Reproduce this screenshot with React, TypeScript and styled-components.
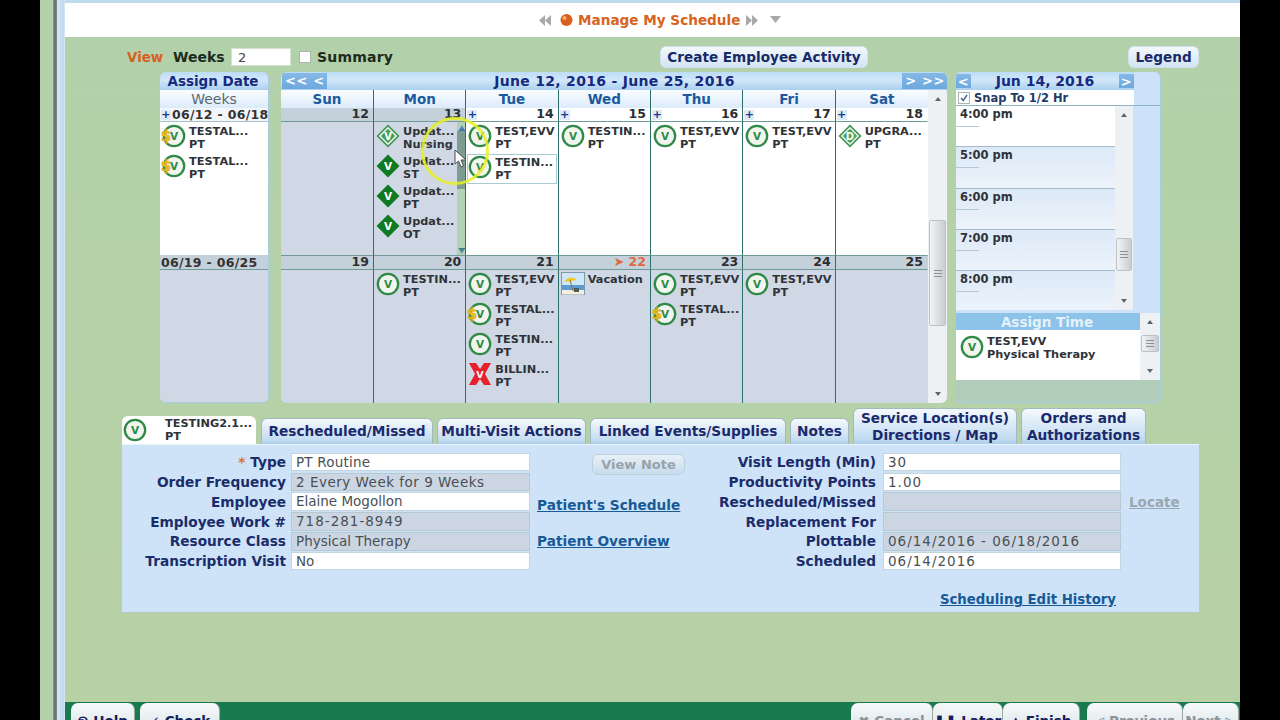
import React from "react";
import styled, { createGlobalStyle } from "styled-components";

const Global = createGlobalStyle`
  html, body { margin: 0; padding: 0; background: #000; }
  * { box-sizing: border-box; }
  body { font-family: "DejaVu Sans", Verdana, sans-serif; }
`;

const Page = styled.div`
  position: relative; width: 1280px; height: 720px; overflow: hidden; display: flex; background: #000;
`;
const Side = styled.div`width: 40px; flex: none; background: #000;`;
const Frame = styled.div`
  width: 1200px; flex: none; display: flex;
  background: #b3d1a9;
`;
const Strip = styled.div`
  width: 25px; flex: none;
  background: linear-gradient(90deg, #b3d1a9 0 13px, #8d9a94 13px, #5f6e6c 15px, #7f8c8c 17px, #d8e6f4 17px, #c2d8ee 24px, #e7f0f8 25px);
`;
const Main = styled.div`flex: 1; min-width: 0; display: flex; flex-direction: column;`;
const TopBar = styled.div`
  height: 37px; flex: none; background: #fff; border-top: 3px solid #bfdcee;
  display: flex; align-items: center; padding-left: 473px; color: #a1a1a1;
`;
const TitleText = styled.span`
  font-size: 13.6px; font-weight: 700; color: #d8631e; margin: 0 5px 0 4px; white-space: nowrap;
`;
const Content = styled.div`
  flex: 1; min-height: 0; display: flex; flex-direction: column; padding-top: 8px;
  background: linear-gradient(180deg, #b2d1aa, #b8d1a4);
`;
const Toolbar = styled.div`
  height: 24px; flex: none; display: flex; align-items: center; padding-left: 62px; color: #1d2b1d;
`;
const ViewLabel = styled.span`font-size: 13.4px; font-weight: 700; color: #d9601e; width: 46px; flex: none;`;
const WeeksLabel = styled.span`font-size: 14px; font-weight: 700; color: #1c2b20; width: 58px; flex: none;`;
const WeeksInput = styled.div`
  width: 60px; height: 18px; background: #fff; border: 1px solid #d5e2d2; font-size: 13px; color: #444; padding-left: 6px; line-height: 17px; flex: none;
`;
const CheckBox = styled.span<{ $checked?: boolean }>`
  width: 12px; height: 12px; flex: none; background: #fff; border: 1px solid #a7b4b2; display: inline-flex; align-items: center; justify-content: center;
`;
const SummaryBox = styled(CheckBox)`margin: 0 6px 0 8px;`;
const SummaryLabel = styled.span`font-size: 14px; font-weight: 700; color: #1d2b1d; letter-spacing: .2px; width: 343px; flex: none;`;
const ToolButton = styled.div<{ $width: number }>`
  width: ${p => p.$width}px; height: 22px; flex: none; border-radius: 6px; border: 1px solid #d2e2ec;
  background: linear-gradient(180deg, #f3f8fc, #d3e4f4); color: #182a66; font-weight: 700; font-size: 13.6px;
  display: flex; align-items: center; justify-content: center; white-space: nowrap;
`;
const ToolGap = styled.div`width: 260px; flex: none;`;

const CalendarRow = styled.div`
  flex: none; height: 331px; margin: 3px 0 0 95px; display: flex; align-items: stretch;
`;
const HeaderCss = `
  background: linear-gradient(180deg, #bcdcf5 0%, #d3e7f9 45%, #a9d0ef 100%);
`;
const AssignPanel = styled.div`
  width: 109px; flex: none; margin-right: 12px; border-radius: 6px; overflow: hidden; border: 1px solid #a8cce4; border-top: 0; border-left: 0;
  display: flex; flex-direction: column; background: #cfd8e4;
`;
const AssignHead = styled.div`
  height: 18px; flex: none; ${HeaderCss} color: #152a80; font-size: 13.5px; font-weight: 700; text-align: center; line-height: 18px; border-radius: 6px 6px 0 0; white-space: nowrap; padding-right: 2px;
`;
const WeeksHead = styled.div`
  height: 18px; flex: none; background: linear-gradient(180deg, #fafdff, #dcebfa); color: #5a6770; font-size: 14px; text-align: center; line-height: 18px;
`;
const WeekRange = styled.div<{ $gray?: boolean }>`
  height: ${p => p.$gray ? 15 : 14}px; flex: none; background: ${p => p.$gray ? "#c5d1da" : "#f3f6f8"}; border-bottom: 1px solid ${p => p.$gray ? "#6f9a98" : "#a8c2c8"};
  display: flex; align-items: center; font-size: 12.5px; font-weight: 700; color: #333; white-space: nowrap; padding-left: 1px; gap: 1px; letter-spacing: .3px;
`;
const WeekBody = styled.div<{ $gray?: boolean }>`
  flex: none; height: 133px; padding: 2px 0 0 2px; background: ${p => p.$gray ? "#cfd8e4" : "#fff"};
`;

const CalendarPanel = styled.div`
  width: 666px; flex: none; margin-right: 8px; border-radius: 6px; overflow: hidden; display: flex; flex-direction: column; background: #cfd8e4;
`;
const CalHead = styled.div`
  height: 18px; flex: none; ${HeaderCss} display: flex; align-items: center; position: relative; padding: 0 0 0 1px;
`;
const NavGroup = styled.div`display: flex; gap: 0;`;
const NavButton = styled.span<{ $w: number }>`
  width: ${p => p.$w}px; height: 16px; background: linear-gradient(180deg, #85b9e6, #6ea8de); color: #fff; font-size: 13px; font-weight: 700; line-height: 15px; text-align: center; letter-spacing: .5px; display: block;
`;
const CalTitle = styled.div`
  flex: 1; text-align: center; color: #152a80; font-size: 14px; font-weight: 700; white-space: nowrap; letter-spacing: .3px;
`;
const CalBody = styled.div`flex: 1; min-height: 0; display: flex;`;
const DayGrid = styled.div`
  flex: 1; display: grid; grid-template-columns: 93px repeat(6, 1fr); grid-template-rows: 18px 14px 133px 15px 133px;
`;
const DayName = styled.div`
  background: linear-gradient(180deg, #fafdff, #dcebfa); color: #1c5a9e; font-size: 13.5px; font-weight: 700; text-align: center; line-height: 18px;
  border-right: 1px solid #2f6f69;
  &:nth-child(7) { border-right: 0; }
`;
const DateCell = styled.div<{ $gray?: boolean; $week2?: boolean; $last?: boolean }>`
  background: ${p => p.$gray ? "#c5d1da" : "#fff"};
  border-right: 1px solid ${p => p.$last ? "transparent" : "#2f6f69"};
  border-bottom: 1px solid #6f9a98;
  ${p => p.$week2 ? "border-top: 1px solid #6f9a98;" : ""}
  display: flex; align-items: center; justify-content: space-between; padding: 0 4px 0 1px;
  font-size: 12.5px; font-weight: 700; color: #2b2f33; line-height: 1;
`;
const DateNum = styled.span<{ $hot?: boolean }>`
  margin-left: auto; color: ${p => p.$hot ? "#e0693a" : "#2b2f33"}; white-space: nowrap;
`;
const Plus = styled.span`
  width: 10px; height: 10px; flex: none; background: #dfeaf6; color: #163a8c; font-size: 11px; line-height: 10px; text-align: center; font-weight: 700; display: block;
`;
const BodyCell = styled.div<{ $gray?: boolean; $last?: boolean }>`
  background: ${p => p.$gray ? "#cfd8e4" : "#fff"};
  border-right: 1px solid ${p => p.$last ? "transparent" : "#2f6f69"};
  padding: 2px 0 0 2px; position: relative; overflow: hidden; min-width: 0;
`;
const Event = styled.div<{ $selected?: boolean }>`
  height: 30px; display: flex; align-items: flex-start; gap: 3px;
  ${p => p.$selected ? "box-shadow: inset 0 0 0 1px #a9ccd4; margin: 0 1px 0 -1px; padding: 1px 0 0 1px;" : ""}
`;
const EventIconWrap = styled.div`width: 24px; height: 24px; flex: none; position: relative;`;
const EventText = styled.div`
  font-size: 11.3px; font-weight: 700; color: #2f3338; line-height: 13px; padding-top: 1px; white-space: pre;
`;
const ScrollTrack = styled.div<{ $w: number; $tint?: string }>`
  width: ${p => p.$w}px; flex: none; background: ${p => p.$tint || "#eef1f4"}; display: flex; flex-direction: column; align-items: center; justify-content: space-between; position: relative;
`;
const Arrow = styled.span<{ $down?: boolean; $color?: string }>`
  width: 0; height: 0; border-left: 3.5px solid transparent; border-right: 3.5px solid transparent;
  ${p => p.$down ? `border-top: 4px solid ${p.$color || "#5a6770"};` : `border-bottom: 4px solid ${p.$color || "#5a6770"};`}
  margin: 7px 0; flex: none;
`;
const Thumb = styled.div<{ $top: number; $h: number; $w: number }>`
  position: absolute; top: ${p => p.$top}px; left: 1px; width: ${p => p.$w}px; height: ${p => p.$h}px;
  background: linear-gradient(90deg, #f2f3f4, #c9cdd0); border: 1px solid #bcc2c6; border-radius: 2px;
  display: flex; flex-direction: column; align-items: center; justify-content: center; gap: 2px;
  & > i { display: block; width: 8px; height: 1px; background: #8b9296; }
`;
const MiniScroll = styled.div`
  position: absolute; top: 0; right: -1px; bottom: 0; width: 9px; background: #b4d2b4; display: flex; flex-direction: column; align-items: center; justify-content: space-between;
`;
const MiniThumb = styled.div`
  position: absolute; top: 9px; left: 0; width: 9px; height: 58px; background: #7d9c92;
`;
const MiniArrow = styled.span<{ $down?: boolean }>`
  width: 7px; height: 6px; display: block; position: relative; margin: 3px 0 1px;
  ${p => p.$down ? "background: linear-gradient(#3d7f86, #66a0b4); clip-path: polygon(0 0,100% 0,50% 100%);" : "background: linear-gradient(#66a0d4, #3d6fa6); clip-path: polygon(50% 0,100% 100%,0 100%);"}
`;

const DayPanel = styled.div`
  width: 206px; flex: none; border-radius: 6px; overflow: hidden; background: #cce2f8; border: 1px solid #a8cce4; border-top: 0;
  display: flex; flex-direction: column;
`;
const DayHead = styled.div`
  height: 18px; flex: none; margin-right: 26px; ${HeaderCss} display: flex; align-items: center; justify-content: space-between; color: #152a80; font-size: 14px; font-weight: 700; white-space: nowrap;
`;
const DayNav = styled(NavButton)`height: 14px;`;
const SnapRow = styled.div`
  height: 15px; flex: none; margin-right: 26px; background: #fff; display: flex; align-items: center; font-size: 11.5px; font-weight: 700; color: #223a66; gap: 4px; padding-left: 2px; white-space: nowrap;
`;
const SnapRule = styled.div`height: 1px; flex: none; background: #8fb4c4;`;
const TimeArea = styled.div`height: 204px; flex: none; display: flex; margin-right: 27px;`;
const TimeList = styled.div`flex: 1; display: flex; flex-direction: column; overflow: hidden;`;
const TimeRow = styled.div<{ $white?: boolean }>`
  height: 41.3px; flex: none; padding: 1px 0 0 4px; position: relative; border-bottom: 1px solid #a2bccb;
  background: ${p => p.$white ? "#fff" : "linear-gradient(180deg, #dde9f7, #ecf3fb)"};
  font-size: 11.5px; font-weight: 700; color: #2f3338; line-height: 14px;
  &::after { content: ""; position: absolute; left: 0; top: 20px; width: 23px; height: 1px; background: #b5c8d6; }
`;
const AssignTimeWrap = styled.div`margin-top: 3px; height: 67px; flex: none; display: flex;`;
const AssignTimeCol = styled.div`flex: 1; display: flex; flex-direction: column; min-width: 0;`;
const AssignTimeHead = styled.div`
  height: 17px; flex: none; background: #8ec3e9; color: #e4f1fb; font-size: 13.5px; font-weight: 700; text-align: center; line-height: 19px; padding-right: 2px;
`;
const AssignTimeBody = styled.div`
  flex: 1; background: #fff; display: flex; gap: 3px; padding: 5px 0 0 4px;
`;
const AssignTimeText = styled(EventText)`padding-top: 0;`;
const DayFoot = styled.div`flex: 1; background: #b1cdb9;`;

const Tabs = styled.div`
  height: 36px; flex: none; margin: 5px 0 0 57px; display: flex; align-items: flex-end; gap: 4px;
`;
const Tab = styled.div<{ $tall?: boolean; $w: number }>`
  width: ${p => p.$w}px; height: ${p => p.$tall ? 36 : 26}px; flex: none; border-radius: 6px 6px 0 0; border: 1px solid #a3b9c0; border-bottom: 0;
  background: linear-gradient(180deg, #f5f9fc, #c3dcf2 85%, #a8cde8);
  color: #1a2a6c; font-weight: 700; font-size: 13.7px; line-height: 16.5px; text-align: center; display: flex; align-items: center; justify-content: center; white-space: pre;
`;
const ActiveTab = styled.div`
  width: 134px; height: 28px; flex: none; border-radius: 6px 6px 0 0; background: #fff; display: flex; align-items: center; margin-right: 1px;
  padding-left: 1px; gap: 18px;
`;
const ActiveTabText = styled(EventText)`padding-top: 0;`;
const Panel = styled.div`
  height: 169px; flex: none; width: 1077px; margin-left: 57px; background: #cfe3f8; border-bottom: 1px solid #aec8c8; border-top: 1px solid #eaf3fb;
  padding-top: 8px; display: flex; flex-direction: column;
`;
const FormRow = styled.div`display: flex; align-items: flex-start;`;
const LeftGrid = styled.div`
  display: grid; grid-template-columns: 164px 239px; column-gap: 5px; row-gap: 1.85px; grid-auto-rows: 18px; align-items: center;
`;
const RightGrid = styled.div`
  display: grid; grid-template-columns: 176px 238px auto; column-gap: 7px; row-gap: 1.85px; grid-auto-rows: 18px; align-items: center;
`;
const Label = styled.div`
  grid-column: 1; text-align: right; color: #1b2c6b; font-weight: 700; font-size: 13.7px; white-space: nowrap;
  & > b { color: #d9742e; font-weight: 700; }
`;
const Field = styled.div<{ $gray?: boolean; $track?: number }>`
  grid-column: 2; height: 18.5px; background: ${p => p.$gray ? "#ccd6e2" : "#fff"}; border: 1px solid ${p => p.$gray ? "#b6cad4" : "#c3d6de"};
  font-size: 13.5px; color: #4a4f55; line-height: 17px; padding-left: 4px; white-space: nowrap; letter-spacing: ${p => p.$track ?? 0}px;
`;
const LocateLink = styled.span`
  grid-column: 3; grid-row: 3; color: #9aa8b2; font-weight: 700; font-size: 13.5px; text-decoration: underline; margin-left: 1px; white-space: nowrap;
`;
const Middle = styled.div`width: 163px; margin-left: 7px; flex: none; display: flex; flex-direction: column; padding-top: 1px;`;
const NoteButton = styled.div`
  width: 93px; height: 21px; margin-left: 55px; border-radius: 6px; border: 1px solid #bcd0dc; background: linear-gradient(180deg, #e8f0f6, #c8dcee);
  color: #98a2aa; font-weight: 700; font-size: 13px; display: flex; align-items: center; justify-content: center;
`;
const PatientLink = styled.span<{ $gap: number }>`
  margin-top: ${p => p.$gap}px; color: #175a96; font-weight: 700; font-size: 13.7px; text-decoration: underline; white-space: nowrap; line-height: 16px;
`;
const HistoryRow = styled.div`
  margin-top: 21px; padding-right: 83px; text-align: right; color: #175a96; font-weight: 700; font-size: 13.3px; text-decoration: underline; line-height: 17px;
`;
const Spacer = styled.div`flex: 1; min-height: 0;`;
const Footer = styled.div`
  height: 18px; flex: none; background: #197a4f; overflow: hidden; display: flex; align-items: flex-start; padding: 1px 0 0 6px;
`;
const FootButton = styled.div<{ $w: number; $off?: boolean; $gap?: number }>`
  width: ${p => p.$w}px; height: 26px; flex: none; margin-left: ${p => p.$gap ?? 0}px; background: linear-gradient(180deg, #f6f9fa, #dfe6ea);
  color: ${p => p.$off ? "#8a949a" : "#13205e"}; font-size: 13.5px; font-weight: 700; border-radius: 7px 7px 0 0;
  display: flex; justify-content: center; gap: 5px; padding-top: 10px; white-space: nowrap; overflow: hidden; border-right: 1px solid #9aa8a4;
`;
const Highlight = styled.div`
  position: absolute; left: 421px; top: 117px; width: 68px; height: 68px; border-radius: 50%; border: 3px solid rgba(232, 240, 40, .85); pointer-events: none; box-shadow: 0 0 2px rgba(232,240,40,.5);
`;
const Pointer = styled.svg`position: absolute; left: 454px; top: 149px; pointer-events: none;`;

type Kind = "circle" | "diamondO" | "diamond" | "dollar" | "x" | "d" | "beach";

const CircleV = () => (
  <>
    <circle cx="12" cy="12" r="10.2" fill="#f2f5ee" stroke="#2f8a48" strokeWidth="2.3" />
    <text x="12" y="16" textAnchor="middle" fontSize="10.5" fontWeight="700" fill="#2a8a44" fontFamily="DejaVu Sans">V</text>
  </>
);

const VisitIcon: React.FC<{ kind: Kind }> = ({ kind }) => (
  <EventIconWrap>
    <svg width="24" height="24" viewBox="0 0 24 24" style={{ overflow: "visible" }}>
      {kind === "circle" && <CircleV />}
      {kind === "dollar" && (
        <>
          <CircleV />
          <text x="4" y="17" textAnchor="middle" fontSize="15" fontWeight="700" fill="#f0c41f" stroke="#c79c10" strokeWidth=".5" fontFamily="DejaVu Sans">$</text>
        </>
      )}
      {(kind === "diamondO" || kind === "d") && (
        <>
          <path d="M12 .5 23.5 12 12 23.5.5 12Z" fill="#3d9050" />
          <path d="M12 2.7 21.3 12 12 21.3 2.7 12Z" fill="#eef6ef" />
          <path d="M12 4.8 19.2 12 12 19.2 4.8 12Z" fill="#46a058" />
          <text x="12" y="15.8" textAnchor="middle" fontSize="10" fontWeight="700" fill="#fff" fontFamily="DejaVu Sans">{kind === "d" ? "D" : "V"}</text>
        </>
      )}
      {kind === "diamond" && (
        <>
          <path d="M12 .5 23.5 12 12 23.5.5 12Z" fill="#0f7a22" />
          <text x="12" y="16" textAnchor="middle" fontSize="10.5" fontWeight="700" fill="#fff" fontFamily="DejaVu Sans">V</text>
        </>
      )}
      {kind === "x" && (
        <>
          <path d="M1 1H8L12 7 16 1H23L17 12 23 23H16L12 17 8 23H1L7 12Z" fill="#e8202c" />
          <text x="12" y="15.5" textAnchor="middle" fontSize="9.5" fontWeight="700" fill="#fff" fontFamily="DejaVu Sans">V</text>
        </>
      )}
      {kind === "beach" && (
        <>
          <rect x=".5" y=".5" width="23" height="22" fill="#cfe6f6" stroke="#7d99ac" />
          <rect x="1" y="13" width="22" height="5" fill="#5d9ad0" />
          <rect x="1" y="18" width="22" height="4.5" fill="#f4efe0" />
          <path d="M3 10Q9 2 16 8Z" fill="#f2c820" />
          <path d="M9 8 12 19" stroke="#8a7a40" strokeWidth="1" />
          <rect x="13" y="16" width="5" height="4" fill="#4f5a5a" />
        </>
      )}
    </svg>
  </EventIconWrap>
);

type Ev = { kind: Kind; a: string; b: string; sel?: boolean };
const Entry: React.FC<{ e: Ev }> = ({ e }) => (
  <Event $selected={e.sel}>
    <VisitIcon kind={e.kind} />
    <EventText>{e.a}{"\n"}{e.b}</EventText>
  </Event>
);

const week1: { date: number; gray?: boolean; ev: Ev[]; mini?: boolean }[] = [
  { date: 12, gray: true, ev: [] },
  { date: 13, gray: true, mini: true, ev: [
    { kind: "diamondO", a: "Updat...", b: "Nursing" },
    { kind: "diamond", a: "Updat...", b: "ST" },
    { kind: "diamond", a: "Updat...", b: "PT" },
    { kind: "diamond", a: "Updat...", b: "OT" },
  ] },
  { date: 14, ev: [{ kind: "circle", a: "TEST,EVV", b: "PT" }, { kind: "circle", a: "TESTIN...", b: "PT", sel: true }] },
  { date: 15, ev: [{ kind: "circle", a: "TESTIN...", b: "PT" }] },
  { date: 16, ev: [{ kind: "circle", a: "TEST,EVV", b: "PT" }] },
  { date: 17, ev: [{ kind: "circle", a: "TEST,EVV", b: "PT" }] },
  { date: 18, ev: [{ kind: "d", a: "UPGRA...", b: "PT" }] },
];
const week2: { date: number; hot?: boolean; ev: Ev[] }[] = [
  { date: 19, ev: [] },
  { date: 20, ev: [{ kind: "circle", a: "TESTIN...", b: "PT" }] },
  { date: 21, ev: [
    { kind: "circle", a: "TEST,EVV", b: "PT" },
    { kind: "dollar", a: "TESTAL...", b: "PT" },
    { kind: "circle", a: "TESTIN...", b: "PT" },
    { kind: "x", a: "BILLIN...", b: "PT" },
  ] },
  { date: 22, hot: true, ev: [{ kind: "beach", a: "Vacation", b: "" }] },
  { date: 23, ev: [{ kind: "circle", a: "TEST,EVV", b: "PT" }, { kind: "dollar", a: "TESTAL...", b: "PT" }] },
  { date: 24, ev: [{ kind: "circle", a: "TEST,EVV", b: "PT" }] },
  { date: 25, ev: [] },
];
const days = ["Sun", "Mon", "Tue", "Wed", "Thu", "Fri", "Sat"];
const times = ["4:00 pm", "5:00 pm", "6:00 pm", "7:00 pm", "8:00 pm"];

const Grip = () => (<><i /><i /><i /></>);

export default function App() {
  return (
    <Page>
      <Global />
      <Side />
      <Frame>
        <Strip />
        <Main>
          <TopBar>
            <svg width="14" height="11" viewBox="0 0 14 11"><path d="M7 0V11L1 5.5ZM13 0V11L7 5.5Z" fill="#a8a8a8" /></svg>
            <svg width="22" height="14" viewBox="0 0 22 14"><circle cx="14.5" cy="7" r="6" fill="#d9601e" /><circle cx="12.5" cy="5" r="2" fill="#f6b070" /></svg>
            <TitleText>Manage My Schedule</TitleText>
            <svg width="14" height="11" viewBox="0 0 14 11"><path d="M1 0V11L7 5.5ZM7 0V11L13 5.5Z" fill="#a8a8a8" /></svg>
            <svg width="25" height="8" viewBox="0 0 25 8"><path d="M11 0H22L16.5 7Z" fill="#a8a8a8" /></svg>
          </TopBar>
          <Content>
            <Toolbar>
              <ViewLabel>View</ViewLabel>
              <WeeksLabel>Weeks</WeeksLabel>
              <WeeksInput>2</WeeksInput>
              <SummaryBox />
              <SummaryLabel>Summary</SummaryLabel>
              <ToolButton $width={208}>Create Employee Activity</ToolButton>
              <ToolGap />
              <ToolButton $width={71}>Legend</ToolButton>
            </Toolbar>

            <CalendarRow>
              <AssignPanel>
                <AssignHead>Assign Date</AssignHead>
                <WeeksHead>Weeks</WeeksHead>
                <WeekRange><Plus>+</Plus>06/12 - 06/18</WeekRange>
                <WeekBody>
                  <Entry e={{ kind: "dollar", a: "TESTAL...", b: "PT" }} />
                  <Entry e={{ kind: "dollar", a: "TESTAL...", b: "PT" }} />
                </WeekBody>
                <WeekRange $gray>06/19 - 06/25</WeekRange>
                <WeekBody $gray />
              </AssignPanel>

              <CalendarPanel>
                <CalHead>
                  <NavGroup>
                    <NavButton $w={29}>&lt;&lt;</NavButton>
                    <NavButton $w={16}>&lt;</NavButton>
                  </NavGroup>
                  <CalTitle>June 12, 2016 - June 25, 2016</CalTitle>
                  <NavGroup>
                    <NavButton $w={18}>&gt;</NavButton>
                    <NavButton $w={27}>&gt;&gt;</NavButton>
                  </NavGroup>
                </CalHead>
                <CalBody>
                  <DayGrid>
                    {days.map(d => <DayName key={d}>{d}</DayName>)}
                    {week1.map((w, i) => (
                      <DateCell key={w.date} $gray={w.gray} $last={i === 6}>
                        {!w.gray && <Plus>+</Plus>}
                        <DateNum>{w.date}</DateNum>
                      </DateCell>
                    ))}
                    {week1.map((w, i) => (
                      <BodyCell key={w.date} $gray={w.gray} $last={i === 6}>
                        {w.ev.map((e, j) => <Entry key={j} e={e} />)}
                        {w.mini && (
                          <MiniScroll>
                            <MiniArrow />
                            <MiniThumb />
                            <MiniArrow $down />
                          </MiniScroll>
                        )}
                      </BodyCell>
                    ))}
                    {week2.map((w, i) => (
                      <DateCell key={w.date} $gray $week2 $last={i === 6}>
                        <DateNum $hot={w.hot}>{w.hot ? "➤ " : ""}{w.date}</DateNum>
                      </DateCell>
                    ))}
                    {week2.map((w, i) => (
                      <BodyCell key={w.date} $gray $last={i === 6}>
                        {w.ev.map((e, j) => <Entry key={j} e={e} />)}
                      </BodyCell>
                    ))}
                  </DayGrid>
                  <ScrollTrack $w={19}>
                    <Arrow />
                    <Thumb $top={130} $h={106} $w={17}><Grip /></Thumb>
                    <Arrow $down />
                  </ScrollTrack>
                </CalBody>
              </CalendarPanel>

              <DayPanel>
                <DayHead>
                  <DayNav $w={15}>&lt;</DayNav>
                  Jun 14, 2016
                  <DayNav $w={15}>&gt;</DayNav>
                </DayHead>
                <SnapRow>
                  <CheckBox $checked>
                    <svg width="10" height="10" viewBox="0 0 10 10"><path d="M2 5 4.2 7.5 8 2" fill="none" stroke="#3a6a9a" strokeWidth="1.4" /></svg>
                  </CheckBox>
                  Snap To 1/2 Hr
                </SnapRow>
                <SnapRule />
                <TimeArea>
                  <TimeList>
                    {times.map((t, i) => <TimeRow key={t} $white={i === 0}>{t}</TimeRow>)}
                  </TimeList>
                  <ScrollTrack $w={18}>
                    <Arrow />
                    <Thumb $top={132} $h={33} $w={16}><Grip /></Thumb>
                    <Arrow $down />
                  </ScrollTrack>
                </TimeArea>
                <AssignTimeWrap>
                  <AssignTimeCol>
                    <AssignTimeHead>Assign Time</AssignTimeHead>
                    <AssignTimeBody>
                      <VisitIcon kind="circle" />
                      <AssignTimeText>TEST,EVV{"\n"}Physical Therapy</AssignTimeText>
                    </AssignTimeBody>
                  </AssignTimeCol>
                  <ScrollTrack $w={20}>
                    <Arrow />
                    <Thumb $top={22} $h={17} $w={18}><Grip /></Thumb>
                    <Arrow $down />
                  </ScrollTrack>
                </AssignTimeWrap>
                <DayFoot />
              </DayPanel>
            </CalendarRow>

            <Tabs>
              <ActiveTab>
                <VisitIcon kind="circle" />
                <ActiveTabText>TESTING2.1...{"\n"}PT</ActiveTabText>
              </ActiveTab>
              <Tab $w={172}>Rescheduled/Missed</Tab>
              <Tab $w={149}>Multi-Visit Actions</Tab>
              <Tab $w={196}>Linked Events/Supplies</Tab>
              <Tab $w={59}>Notes</Tab>
              <Tab $w={164} $tall>{"Service Location(s)\nDirections / Map"}</Tab>
              <Tab $w={125} $tall>{"Orders and\nAuthorizations"}</Tab>
            </Tabs>
            <Panel>
              <FormRow>
                <LeftGrid>
                  <Label><b>*</b> Type</Label><Field $track={0.2}>PT Routine</Field>
                  <Label>Order Frequency</Label><Field $gray $track={0.5}>2 Every Week for 9 Weeks</Field>
                  <Label>Employee</Label><Field>Elaine Mogollon</Field>
                  <Label>Employee Work #</Label><Field $gray $track={1}>718-281-8949</Field>
                  <Label>Resource Class</Label><Field $gray>Physical Therapy</Field>
                  <Label>Transcription Visit</Label><Field>No</Field>
                </LeftGrid>
                <Middle>
                  <NoteButton>View Note</NoteButton>
                  <PatientLink $gap={22}>Patient's Schedule</PatientLink>
                  <PatientLink $gap={20}>Patient Overview</PatientLink>
                </Middle>
                <RightGrid>
                  <Label>Visit Length (Min)</Label><Field $track={1}>30</Field>
                  <Label>Productivity Points</Label><Field $track={1}>1.00</Field>
                  <Label>Rescheduled/Missed</Label><Field $gray />
                  <LocateLink>Locate</LocateLink>
                  <Label>Replacement For</Label><Field $gray />
                  <Label>Plottable</Label><Field $gray $track={1}>06/14/2016 - 06/18/2016</Field>
                  <Label>Scheduled</Label><Field $track={1}>06/14/2016</Field>
                </RightGrid>
              </FormRow>
              <HistoryRow>Scheduling Edit History</HistoryRow>
            </Panel>
            <Spacer />
          </Content>
          <Footer>
            <FootButton $w={64}>❷ Help</FootButton>
            <FootButton $w={80} $gap={5}>✓ Check</FootButton>
            <FootButton $w={82} $gap={631} $off>✖ Cancel</FootButton>
            <FootButton $w={70}>❚❚ Later</FootButton>
            <FootButton $w={77}>▲ Finish</FootButton>
            <FootButton $w={96} $gap={7} $off>◁ Previous</FootButton>
            <FootButton $w={56} $off>Next ▷</FootButton>
          </Footer>
        </Main>
      </Frame>
      <Side />
      <Highlight />
      <Pointer width="13" height="19" viewBox="0 0 13 19">
        <path d="M1 1V15L4.5 12 7 18 9.5 17 7 11H12Z" fill="#fff" stroke="#4a4f55" strokeWidth="1" />
      </Pointer>
    </Page>
  );
}
